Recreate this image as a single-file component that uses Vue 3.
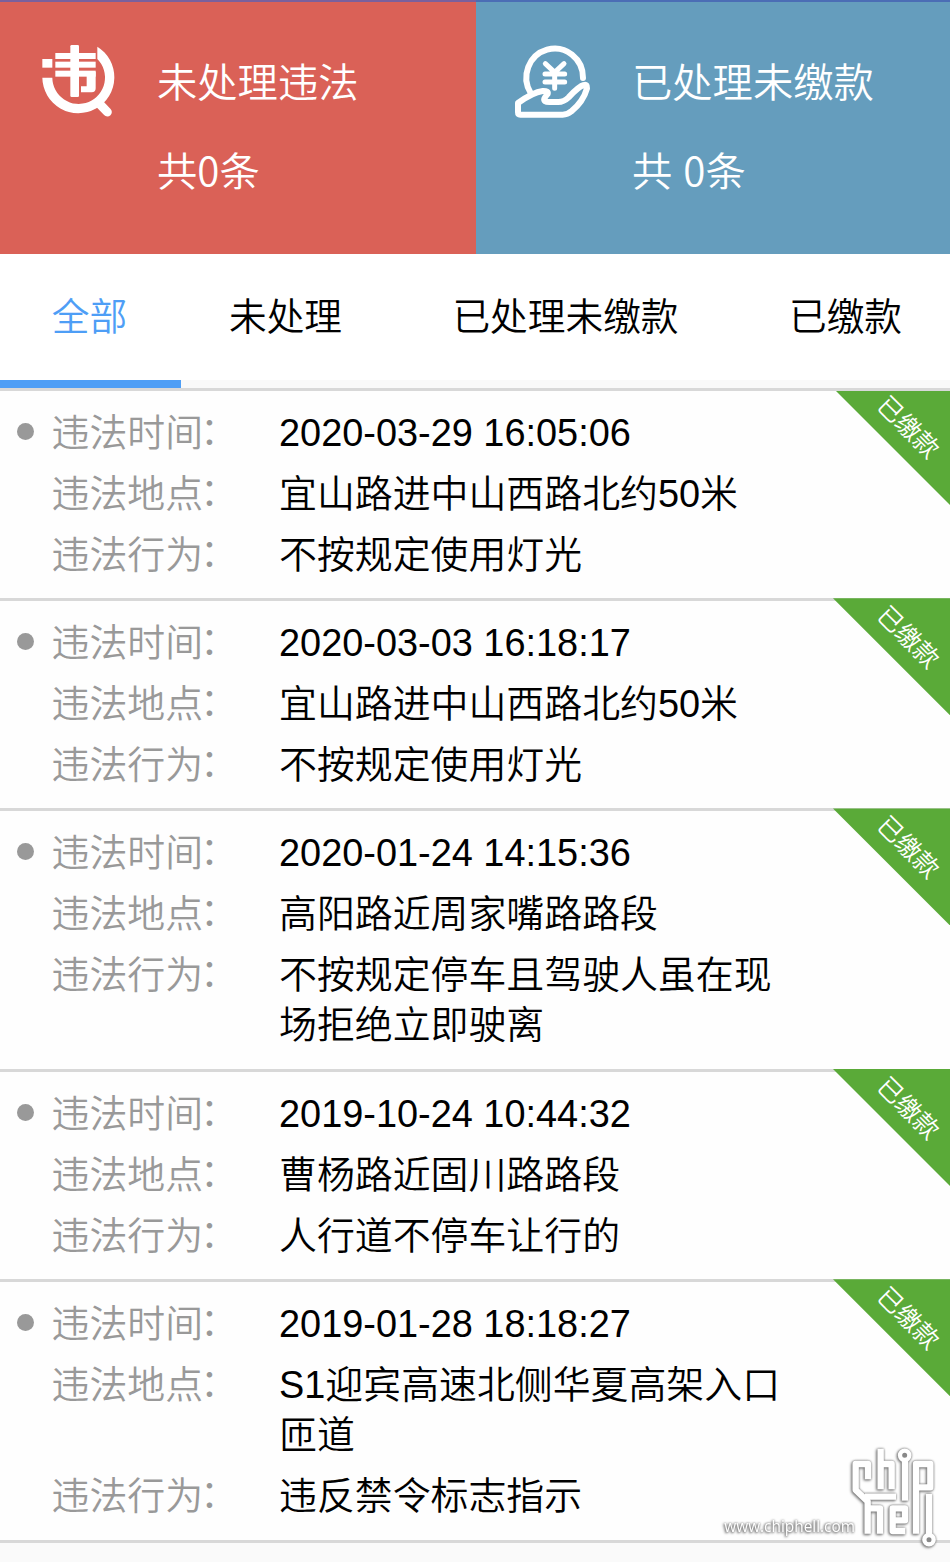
<script setup>
import { ref } from 'vue'

const tabs = [
  { key: 'all', label: '全部' },
  { key: 'pending', label: '未处理' },
  { key: 'unpaid', label: '已处理未缴款' },
  { key: 'paid', label: '已缴款' },
]

const activeTab = ref('all')

const records = [
  { time: '2020-03-29 16:05:06', place: '宜山路进中山西路北约50米', action: '不按规定使用灯光' },
  { time: '2020-03-03 16:18:17', place: '宜山路进中山西路北约50米', action: '不按规定使用灯光' },
  { time: '2020-01-24 14:15:36', place: '高阳路近周家嘴路路段', action: '不按规定停车且驾驶人虽在现场拒绝立即驶离' },
  { time: '2019-10-24 10:44:32', place: '曹杨路近固川路路段', action: '人行道不停车让行的' },
  { time: '2019-01-28 18:18:27', place: 'S1迎宾高速北侧华夏高架入口匝道', action: '违反禁令标志指示' },
]
</script>

<template>
  <div class="page">
    <header class="summary">
      <section class="summary__card summary__card--red">
        <svg class="summary__icon" viewBox="0 0 300 270" fill="#fff" aria-hidden="true">
          <path d="M37 128A108 108 0 1 0 202 35V72A79 79 0 1 1 67 128Z" />
          <path d="M205 203L232 231" fill="none" stroke="#fff" stroke-width="27" stroke-linecap="round" />
          <rect x="37" y="72" width="30" height="26" />
          <rect x="76" y="54" width="121" height="18" />
          <rect x="76" y="80" width="121" height="18" />
          <rect x="76" y="107" width="121" height="18" />
          <rect x="121" y="30" width="26" height="156" rx="4" />
          <path d="M170 110H197V160Q197 172 185 172H153V154H170Z" />
        </svg>
        <div class="summary__text">
          <div>未处理违法</div>
          <div>共0条</div>
        </div>
      </section>
      <section class="summary__card summary__card--blue">
        <svg
          class="summary__icon"
          viewBox="0 0 300 270"
          fill="none"
          stroke="#fff"
          stroke-width="18"
          stroke-linecap="round"
          stroke-linejoin="round"
          aria-hidden="true"
        >
          <path d="M249 126A85 87 0 1 0 92 171" />
          <path d="M54 201V229Q54 236 61 236H188Q203 236 214 226C240 205 254 182 261 157Q262 144 252 147C236 151 218 171 206 184Q191 198 175 198H148Q130 198 133 188Q136 181 143 174Q146 164 128 165C106 168 72 188 54 201Z" />
          <path stroke-width="15" d="M136 83L164 109L192 83M164 109V157M135 114H194M135 138H194" />
        </svg>
        <div class="summary__text">
          <div>已处理未缴款</div>
          <div>共 0条</div>
        </div>
      </section>
    </header>

    <nav class="tabs">
      <button
        v-for="tab in tabs"
        :key="tab.key"
        type="button"
        class="tabs__item"
        :class="[`tabs__item--${tab.key}`, { 'tabs__item--active': activeTab === tab.key }]"
        @click="activeTab = tab.key"
      >
        {{ tab.label }}
      </button>
    </nav>

    <ul class="list">
      <li v-for="record in records" :key="record.time" class="record">
        <span class="record__dot" />
        <dl class="record__rows">
          <dt>违法时间<span class="record__colon">：</span></dt>
          <dd>{{ record.time }}</dd>
          <dt>违法地点<span class="record__colon">：</span></dt>
          <dd>{{ record.place }}</dd>
          <dt>违法行为<span class="record__colon">：</span></dt>
          <dd>{{ record.action }}</dd>
        </dl>
        <div class="record__ribbon"><span>已缴款</span></div>
      </li>
    </ul>

    <!-- Site watermark over the bottom right corner -->
    <div class="watermark">
      <span class="watermark__url">www.chiphell.com</span>
      <svg class="watermark__logo" viewBox="0 0 330 366" aria-hidden="true">
        <g fill="none" stroke="#fff" stroke-width="19" stroke-linejoin="round">
          <path d="M84 118V72H47V150L83 184V281" />
          <path d="M75 170H168M83 205H120V281" />
          <path d="M122 26V148M122 72H155V148" />
          <path d="M195 58V182" />
          <path d="M228 281V72H271V142H232" />
          <path d="M158 241H195V205H158V273H196" />
          <path d="M267 162V290" />
        </g>
        <g fill="#888" stroke="#fff" stroke-width="13">
          <circle cx="194" cy="46" r="14" />
          <circle cx="267" cy="299" r="14" />
        </g>
      </svg>
    </div>
  </div>
</template>

<style>
body {
  margin: 0;
  background: #fafafa;
}
</style>

<style scoped>
.page {
  position: relative;
  width: 950px;
  height: 1562px;
  overflow: hidden;
  background: #fafafa;
  color: #000;
  font-family: 'Liberation Sans', 'Noto Sans CJK SC', sans-serif;
  font-size: 37.9px;
  font-weight: 350;
}

/* Summary cards */
.summary {
  display: flex;
  height: 254px;
}

.summary__card {
  box-sizing: border-box;
  display: flex;
  gap: 27px;
  width: 475px;
  padding: 33px 0 0 30px;
  border-top: 2px solid #4b6db5;
  color: #fff;
}

.summary__card--red {
  width: 476px;
  border-color: #7a609d;
  background: #da6157;
}

.summary__card--blue {
  gap: 32px;
  width: 474px;
  padding-left: 24px;
  background: #659dbd;
}

.summary__icon {
  flex: none;
  width: 100px;
  height: 90px;
}

.summary__card--blue .summary__icon {
  margin-top: 1px;
}

.summary__text {
  padding-top: 1px;
  font-family: 'Noto Sans CJK SC', sans-serif;
  font-size: 40.3px;
  line-height: 88.5px;
  word-spacing: 2px;
  white-space: nowrap;
}

/* Tabs */
.tabs {
  display: flex;
  height: 134px;
  border-bottom: 3px solid #d8d8d8;
  background: #fff;
}

.tabs__item {
  box-sizing: border-box;
  padding: 0 0 8px;
  border: 0;
  border-bottom: 8px solid #f9f9f9;
  background: none;
  color: #000;
  font: inherit;
  font-size: 37.7px;
  text-align: center;
  white-space: nowrap;
  cursor: pointer;
}

.tabs__item--all {
  width: 181px;
  padding-right: 2px;
}

.tabs__item--pending {
  width: 209px;
}

.tabs__item--unpaid {
  width: 351px;
}

.tabs__item--paid {
  width: 209px;
}

.tabs__item--active {
  border-bottom-color: #4e9ef6;
  color: #4e9ef6;
}

/* Records */
.list {
  margin: 0;
  padding: 0;
  overflow: hidden;
  list-style: none;
  background: #fefefe;
}

.record {
  position: relative;
  display: flex;
  padding: 16.5px 0 18.2px 17px;
  border-bottom: 3px solid #d8d8d8;
}

.record__dot {
  flex: none;
  width: 17px;
  height: 17px;
  margin: 15px 17.5px 0 0;
  border-radius: 50%;
  background: #999;
}

.record__rows {
  display: grid;
  grid-template-columns: 227.5px 520px;
  row-gap: 10.5px;
  margin: 0;
  line-height: 50.5px;
}

.record__rows dt {
  color: #999;
}

/* Sits a little higher and closer than the font's full-width colon */
.record__colon {
  margin-left: -3px;
  line-height: 0;
  vertical-align: 2px;
}

.record__rows dd {
  margin: 0;
}

.record__ribbon {
  position: absolute;
  top: -3px;
  right: 0;
  z-index: 1;
  width: 117px;
  height: 117px;
  background: #5aaa38;
  clip-path: polygon(0 0, 100% 0, 100% 100%);
  color: #fff;
  font-size: 25px;
  line-height: 30px;
}

.record__ribbon span {
  position: absolute;
  top: 24px;
  left: 38px;
  width: 75px;
  text-align: center;
  white-space: nowrap;
  transform: rotate(45deg);
}

/* Watermark */
.watermark {
  position: absolute;
  right: 0;
  bottom: 0;
  display: flex;
  align-items: flex-end;
  filter: drop-shadow(0 0 1px #777) drop-shadow(-1px 1px 1px #888);
}

.watermark__url {
  margin: 0 -15px 24px 0;
  color: #fff;
  font-family: 'Open Sans', sans-serif;
  font-size: 15.4px;
  font-weight: 500;
  line-height: 22px;
}

.watermark__logo {
  width: 110px;
  height: 122px;
}
</style>
